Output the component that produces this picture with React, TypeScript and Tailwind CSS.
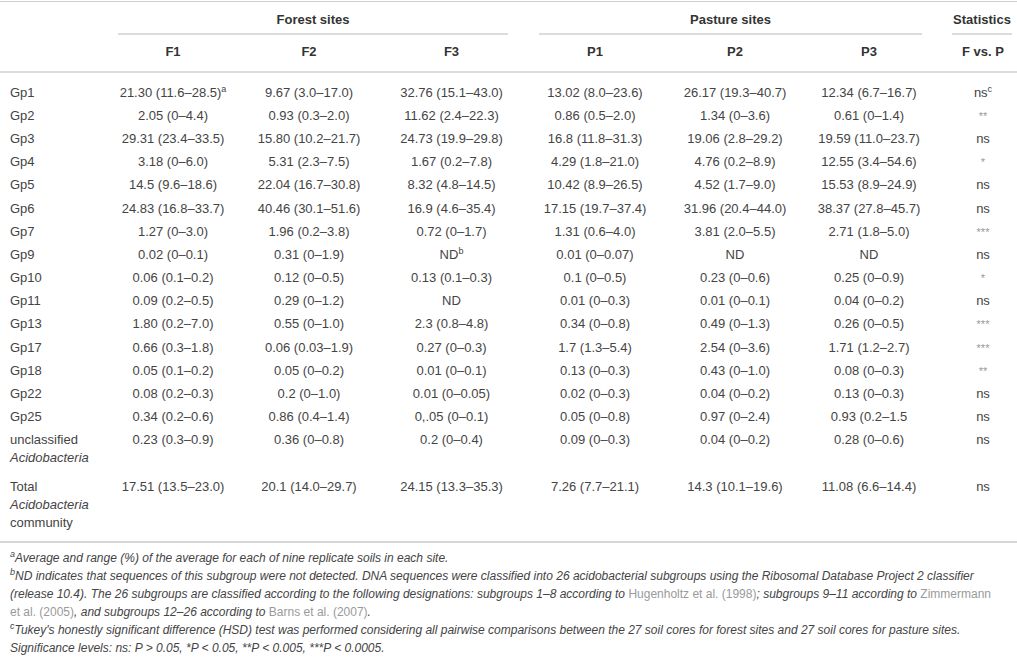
const COLS = 'grid grid-cols-[108px_130px_142px_143px_144px_136px_132px_82px]'

type Row = { label: React.ReactNode; cells: React.ReactNode[]; stat: React.ReactNode; extra?: string }

const Sup = ({ children }: { children: React.ReactNode }) => (
  <sup className="text-[9px] relative -top-[5px]">{children}</sup>
)

const ROWS: Row[] = [
  { label: 'Gp1', cells: [<>21.30 (11.6–28.5)<Sup>a</Sup></>, '9.67 (3.0–17.0)', '32.76 (15.1–43.0)', '13.02 (8.0–23.6)', '26.17 (19.3–40.7)', '12.34 (6.7–16.7)'], stat: <>ns<Sup>c</Sup></> },
  { label: 'Gp2', cells: ['2.05 (0–4.4)', '0.93 (0.3–2.0)', '11.62 (2.4–22.3)', '0.86 (0.5–2.0)', '1.34 (0–3.6)', '0.61 (0–1.4)'], stat: '**' },
  { label: 'Gp3', cells: ['29.31 (23.4–33.5)', '15.80 (10.2–21.7)', '24.73 (19.9–29.8)', '16.8 (11.8–31.3)', '19.06 (2.8–29.2)', '19.59 (11.0–23.7)'], stat: 'ns' },
  { label: 'Gp4', cells: ['3.18 (0–6.0)', '5.31 (2.3–7.5)', '1.67 (0.2–7.8)', '4.29 (1.8–21.0)', '4.76 (0.2–8.9)', '12.55 (3.4–54.6)'], stat: '*' },
  { label: 'Gp5', cells: ['14.5 (9.6–18.6)', '22.04 (16.7–30.8)', '8.32 (4.8–14.5)', '10.42 (8.9–26.5)', '4.52 (1.7–9.0)', '15.53 (8.9–24.9)'], stat: 'ns' },
  { label: 'Gp6', cells: ['24.83 (16.8–33.7)', '40.46 (30.1–51.6)', '16.9 (4.6–35.4)', '17.15 (19.7–37.4)', '31.96 (20.4–44.0)', '38.37 (27.8–45.7)'], stat: 'ns' },
  { label: 'Gp7', cells: ['1.27 (0–3.0)', '1.96 (0.2–3.8)', '0.72 (0–1.7)', '1.31 (0.6–4.0)', '3.81 (2.0–5.5)', '2.71 (1.8–5.0)'], stat: '***' },
  { label: 'Gp9', cells: ['0.02 (0–0.1)', '0.31 (0–1.9)', <>ND<Sup>b</Sup></>, '0.01 (0–0.07)', 'ND', 'ND'], stat: 'ns' },
  { label: 'Gp10', cells: ['0.06 (0.1–0.2)', '0.12 (0–0.5)', '0.13 (0.1–0.3)', '0.1 (0–0.5)', '0.23 (0–0.6)', '0.25 (0–0.9)'], stat: '*' },
  { label: 'Gp11', cells: ['0.09 (0.2–0.5)', '0.29 (0–1.2)', 'ND', '0.01 (0–0.3)', '0.01 (0–0.1)', '0.04 (0–0.2)'], stat: 'ns' },
  { label: 'Gp13', cells: ['1.80 (0.2–7.0)', '0.55 (0–1.0)', '2.3 (0.8–4.8)', '0.34 (0–0.8)', '0.49 (0–1.3)', '0.26 (0–0.5)'], stat: '***' },
  { label: 'Gp17', cells: ['0.66 (0.3–1.8)', '0.06 (0.03–1.9)', '0.27 (0–0.3)', '1.7 (1.3–5.4)', '2.54 (0–3.6)', '1.71 (1.2–2.7)'], stat: '***' },
  { label: 'Gp18', cells: ['0.05 (0.1–0.2)', '0.05 (0–0.2)', '0.01 (0–0.1)', '0.13 (0–0.3)', '0.43 (0–1.0)', '0.08 (0–0.3)'], stat: '**' },
  { label: 'Gp22', cells: ['0.08 (0.2–0.3)', '0.2 (0–1.0)', '0.01 (0–0.05)', '0.02 (0–0.3)', '0.04 (0–0.2)', '0.13 (0–0.3)'], stat: 'ns' },
  { label: 'Gp25', cells: ['0.34 (0.2–0.6)', '0.86 (0.4–1.4)', '0,.05 (0–0.1)', '0.05 (0–0.8)', '0.97 (0–2.4)', '0.93 (0.2–1.5'], stat: 'ns' },
  { label: <>unclassified<br /><i>Acidobacteria</i></>, cells: ['0.23 (0.3–0.9)', '0.36 (0–0.8)', '0.2 (0–0.4)', '0.09 (0–0.3)', '0.04 (0–0.2)', '0.28 (0–0.6)'], stat: 'ns' },
  { label: <>Total<br /><i>Acidobacteria</i><br />community</>, cells: ['17.51 (13.5–23.0)', '20.1 (14.0–29.7)', '24.15 (13.3–35.3)', '7.26 (7.7–21.1)', '14.3 (10.1–19.6)', '11.08 (6.6–14.4)'], stat: 'ns', extra: 'mt-[5px]' },
]

const Ref = ({ children }: { children: React.ReactNode }) => (
  <span className="not-italic text-[#9a9a9a]">{children}</span>
)

export default function App() {
  return (
    <div className="w-[1017px] h-[658px] bg-white overflow-hidden font-['Liberation_Sans',Arial,sans-serif] text-[13px] text-[#444]">
      <div className="mt-px h-px bg-[#cfcfcf]" />

      {/* group header */}
      <div className={`${COLS} h-[33px] font-bold text-[#333]`}>
        <div />
        <div className="col-span-3 flex flex-col pt-[9px] pl-[10px] pr-[15px]">
          <span className="text-center leading-[18px]">Forest sites</span>
          <div className="mt-[4px] h-[2px] bg-[#dcdcdc]" />
        </div>
        <div className="col-span-3 flex flex-col pt-[9px] pl-[16px] pr-[13px]">
          <span className="text-center leading-[18px]">Pasture sites</span>
          <div className="mt-[4px] h-[2px] bg-[#dcdcdc]" />
        </div>
        <div className="flex flex-col pt-[9px] pl-[17px] pr-[5px]">
          <span className="text-center leading-[18px] whitespace-nowrap">Statistics</span>
          <div className="mt-[4px] h-[2px] bg-[#dcdcdc]" />
        </div>
      </div>

      {/* column header */}
      <div className={`${COLS} h-[36px] pt-[8px] leading-[18px] font-bold text-[#333] text-center`}>
        <div />
        <div>F1</div>
        <div>F2</div>
        <div>F3</div>
        <div>P1</div>
        <div>P2</div>
        <div>P3</div>
        <div className="pl-[14px] whitespace-nowrap">F vs. P</div>
      </div>
      <div className="h-[2px] bg-[#dcdcdc]" />

      {/* body */}
      <div className="pt-[8px] pb-[7px]">
        {ROWS.map((r, i) => (
          <div key={i} className={`${COLS} py-[2.6px] leading-[18px] ${r.extra ?? ''}`}>
            <div className="pl-[10px]">{r.label}</div>
            {r.cells.map((c, j) => (
              <div key={j} className="text-center whitespace-nowrap">{c}</div>
            ))}
            <div className={`pl-[14px] text-center ${r.stat === 'ns' || typeof r.stat !== 'string' ? '' : 'text-[#999] text-[11px]'}`}>{r.stat}</div>
          </div>
        ))}
      </div>
      <div className="h-[2px] bg-[#d6d6d6]" />

      {/* footnotes */}
      <div className="pt-[6px] pl-[10px] text-[12px] leading-[18px] italic text-[#444] whitespace-nowrap">
        <div><Sup>a</Sup>Average and range (%) of the average for each of nine replicate soils in each site.</div>
        <div><Sup>b</Sup>ND indicates that sequences of this subgroup were not detected. DNA sequences were classified into 26 acidobacterial subgroups using the Ribosomal Database Project 2 classifier</div>
        <div>(release 10.4). The 26 subgroups are classified according to the following designations: subgroups 1–8 according to <Ref>Hugenholtz et al. (1998)</Ref>; subgroups 9–11 according to <Ref>Zimmermann</Ref></div>
        <div><Ref>et al. (2005)</Ref>, and subgroups 12–26 according to <Ref>Barns et al. (2007)</Ref>.</div>
        <div><Sup>c</Sup>Tukey's honestly significant difference (HSD) test was performed considering all pairwise comparisons between the 27 soil cores for forest sites and 27 soil cores for pasture sites.</div>
        <div>Significance levels: ns: <i>P</i> &gt; 0.05, *<i>P</i> &lt; 0.05, **<i>P</i> &lt; 0.005, ***<i>P</i> &lt; 0.0005.</div>
      </div>
    </div>
  )
}
